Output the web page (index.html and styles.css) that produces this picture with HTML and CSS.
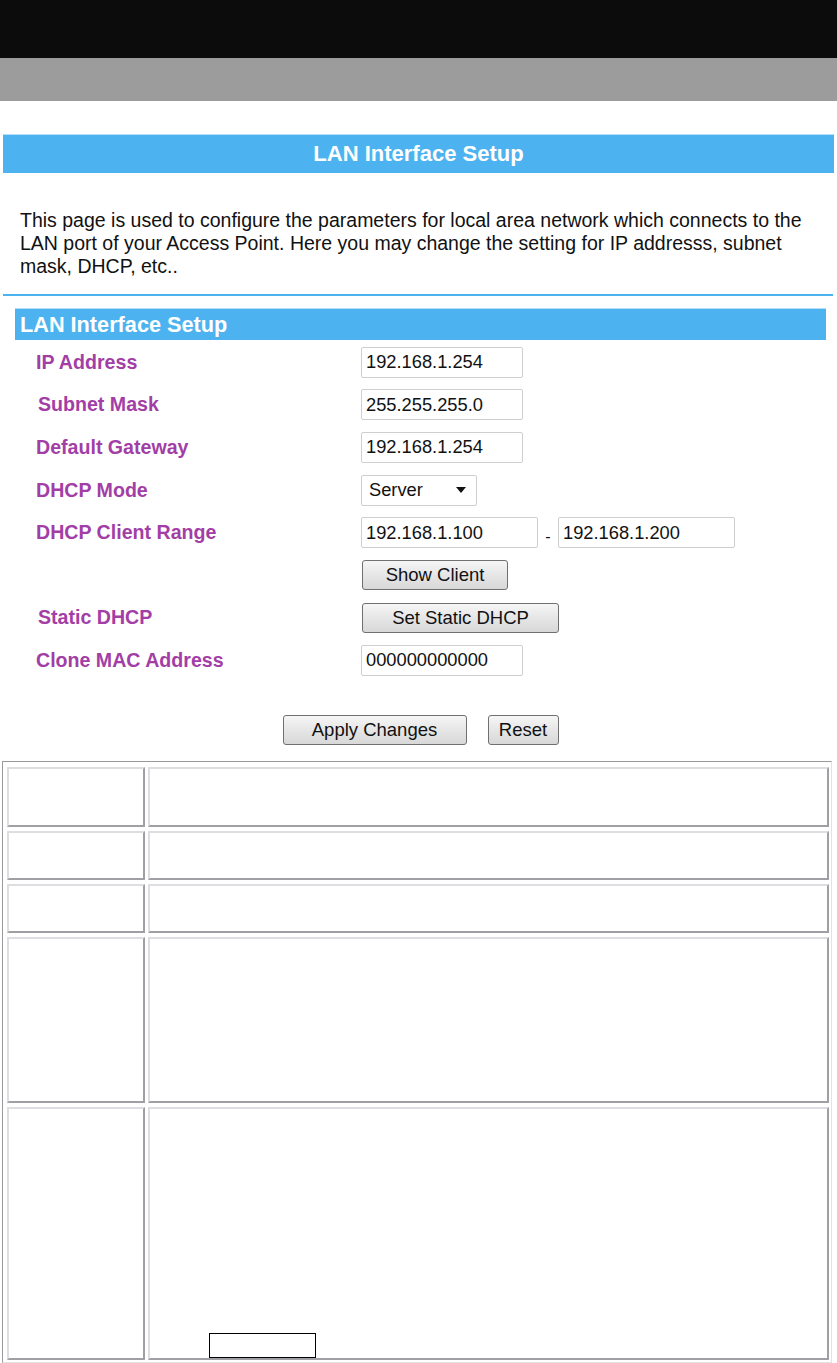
FILE: index.html
```html
<!DOCTYPE html>
<html lang="en">
<head>
  <meta charset="UTF-8">
  <meta name="viewport" content="width=device-width, initial-scale=1.0">
  <title>LAN Interface Setup</title>
  <link rel="stylesheet" href="styles.css">
</head>
<body>

  <div class="topbar"></div>
  <div class="subbar"></div>

  <div class="page">
    <div class="title-bar">LAN Interface Setup</div>

    <p class="intro">This page is used to configure the parameters for local area network which connects to the LAN port of your Access Point. Here you may change the setting for IP addresss, subnet mask, DHCP, etc..</p>

    <div class="divider"></div>

    <div class="section-bar">LAN Interface Setup</div>

    <div class="form">
      <div class="row">
        <label class="label">IP Address</label>
        <input class="field" type="text" value="192.168.1.254">
      </div>
      <div class="row">
        <label class="label shift">Subnet Mask</label>
        <input class="field" type="text" value="255.255.255.0">
      </div>
      <div class="row">
        <label class="label">Default Gateway</label>
        <input class="field" type="text" value="192.168.1.254">
      </div>
      <div class="row">
        <label class="label">DHCP Mode</label>
        <div class="select">
          <span>Server</span>
          <span class="arrow"></span>
        </div>
      </div>
      <div class="row">
        <label class="label">DHCP Client Range</label>
        <input class="field wide" type="text" value="192.168.1.100">
        <span class="dash">-</span>
        <input class="field wide" type="text" value="192.168.1.200">
      </div>
      <div class="row">
        <span class="label"></span>
        <button class="btn show-btn">Show Client</button>
      </div>
      <div class="row">
        <label class="label shift">Static DHCP</label>
        <button class="btn static-btn">Set Static DHCP</button>
      </div>
      <div class="row">
        <label class="label">Clone MAC Address</label>
        <input class="field" type="text" value="000000000000">
      </div>
    </div>

    <div class="actions">
      <button class="btn apply-btn">Apply Changes</button>
      <button class="btn reset-btn">Reset</button>
    </div>

    <div class="notes">
      <div class="cell r1"></div>
      <div class="cell r1"></div>
      <div class="cell r2"></div>
      <div class="cell r2"></div>
      <div class="cell r3"></div>
      <div class="cell r3"></div>
      <div class="cell r4"></div>
      <div class="cell r4"></div>
      <div class="cell r5"></div>
      <div class="cell r5 bottom"><span class="blank-box"></span></div>
    </div>
  </div>

</body>
</html>
```

FILE: styles.css
```css
body {
  font-family: "Liberation Sans", Arial, sans-serif;
  background-color: #ffffff;
  color: #111111;
  margin: 0;
  padding: 0;
}

.topbar {
  height: 58px;
  background-color: #0c0c0c;
}

.subbar {
  height: 43px;
  background-color: #9c9c9c;
}

.page {
  padding-top: 33px;
}

.title-bar {
  margin: 0 3px;
  height: 38px;
  line-height: 38px;
  border-top: 1px solid #b3ddf8;
  background-color: #4db3f0;
  color: white;
  font-weight: bold;
  font-size: 22px;
  text-align: center;
}

.intro {
  margin: 36px 6px 0 20px;
  font-size: 19.5px;
  line-height: 23px;
}

.divider {
  margin: 16px 4px 0 3px;
  height: 2px;
  background-color: #4db3ee;
}

.section-bar {
  margin: 12px 11px 0 15px;
  height: 31px;
  line-height: 32px;
  border-top: 1px solid #b3ddf8;
  background-color: #4db3f0;
  color: white;
  font-weight: bold;
  font-size: 21.7px;
  padding-left: 5px;
}

.form {
  padding-top: 1px;
}

.row {
  display: flex;
  align-items: center;
  height: 42.6px;
}

.label {
  width: 325px;
  padding-left: 36px;
  color: #a23ea6;
  font-weight: bold;
  font-size: 19.6px;
}

.label.shift {
  padding-left: 38px;
  width: 323px;
}

.field {
  box-sizing: border-box;
  width: 162px;
  height: 31px;
  padding: 0 4px;
  border: 1px solid #cfcfcf;
  border-radius: 2px;
  font-family: "Liberation Sans", Arial, sans-serif;
  font-size: 18.3px;
  color: #111111;
  margin: 0;
}

.field.wide {
  width: 177px;
}

.dash {
  width: 20px;
  text-align: center;
  font-size: 16px;
  padding-top: 8px;
}

.select {
  box-sizing: border-box;
  width: 116px;
  height: 31px;
  border: 1px solid #cfcfcf;
  border-radius: 2px;
  display: flex;
  align-items: center;
  justify-content: space-between;
  padding: 0 10px 0 7px;
  font-size: 18.3px;
}

.arrow {
  width: 0;
  height: 0;
  border-left: 5px solid transparent;
  border-right: 5px solid transparent;
  border-top: 6px solid #111111;
}

.btn {
  box-sizing: border-box;
  height: 30px;
  margin: 0;
  padding: 0;
  border: 1px solid #707070;
  border-radius: 3px;
  background: linear-gradient(#f6f6f6, #e6e6e6 50%, #d8d8d8);
  font-family: "Liberation Sans", Arial, sans-serif;
  font-size: 18.5px;
  color: #111111;
}

.show-btn {
  width: 146px;
  margin-left: 1px;
}

.static-btn {
  width: 197px;
  margin-left: 1px;
}

.apply-btn {
  width: 184px;
}

.reset-btn {
  width: 71px;
}

.actions {
  display: flex;
  justify-content: center;
  gap: 21px;
  margin-top: 33px;
  padding-left: 4px;
}

.notes {
  display: grid;
  grid-template-columns: 138px 681px;
  column-gap: 3px;
  row-gap: 4px;
  width: 822px;
  margin: 16px 0 0 2px;
  padding: 5px 2px 2px 4px;
  border: 1px solid #9a9a9a;
  border-right-color: #e2e2e4;
  border-bottom-color: #e2e2e4;
}

.cell {
  box-sizing: border-box;
  border: 2px solid #dedee2;
  border-right-color: #a0a0a4;
  border-bottom-color: #a0a0a4;
}

.r1 { height: 60px; }
.r2 { height: 49px; }
.r3 { height: 49px; }
.r4 { height: 166px; }
.r5 { height: 253px; }

.bottom {
  display: flex;
  align-items: flex-end;
}

.blank-box {
  display: block;
  width: 107px;
  height: 25px;
  box-sizing: border-box;
  margin-left: 59px;
  border: 1px solid #000000;
}
```
